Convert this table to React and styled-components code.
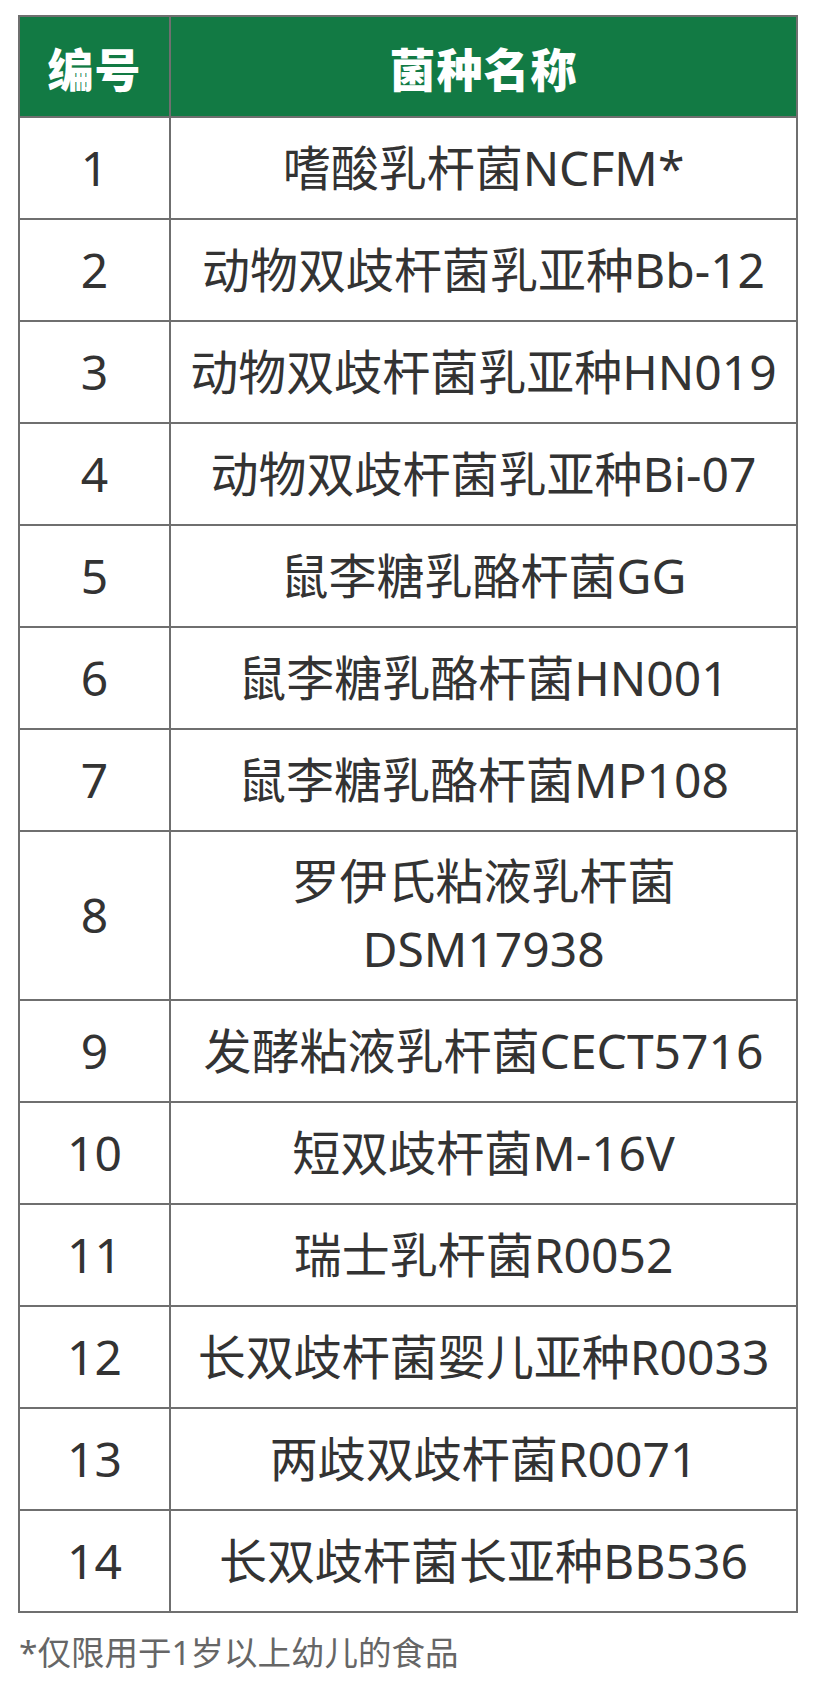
import styled, { createGlobalStyle } from 'styled-components'

const GlobalStyle = createGlobalStyle`
  html, body {
    margin: 0;
    padding: 0;
    background: #fff;
  }
  body {
    font-family: "Noto Sans", "Noto Sans CJK SC", sans-serif;
    color: #333;
  }
`

// Styles
const Page = styled('div')`
  width: 818px;
  padding: 15px 20px 0 18px;
  box-sizing: border-box;
`
const Table = styled('div')`
  display: flex;
  flex-flow: column nowrap;
  border-top: 2px solid #6f6f6f;
  border-left: 2px solid #6f6f6f;
  width: 780px;
  box-sizing: border-box;
`
const Row = styled('div')`
  display: grid;
  grid-template-columns: 151px 1fr;
`
const Cell = styled('div')`
  display: flex;
  align-items: center;
  justify-content: center;
  text-align: center;
  min-height: ${({ $head }) => ($head ? '101px' : '102px')};
  padding: 0 8px;
  box-sizing: border-box;
  border-right: 2px solid #6f6f6f;
  border-bottom: 2px solid #6f6f6f;
  font-size: 48px;
  line-height: 68px;
  color: #333;
  background: #fff;
  ${({ $double }) => $double && 'padding: 15px 8px 16px;'}
`
const HeadCell = styled(Cell)`
  background: #127a44;
  color: #fff;
  font-family: "Noto Sans CJK SC", sans-serif;
  font-weight: 900;
  font-size: 46px;
  letter-spacing: 1px;
`
const Note = styled('div')`
  margin-top: 17px;
  padding-left: 1px;
  font-size: 33.5px;
  line-height: 44px;
  color: #666;
`

const strains = [
  ['1', '嗜酸乳杆菌NCFM*'],
  ['2', '动物双歧杆菌乳亚种Bb-12'],
  ['3', '动物双歧杆菌乳亚种HN019'],
  ['4', '动物双歧杆菌乳亚种Bi-07'],
  ['5', '鼠李糖乳酪杆菌GG'],
  ['6', '鼠李糖乳酪杆菌HN001'],
  ['7', '鼠李糖乳酪杆菌MP108'],
  ['8', ['罗伊氏粘液乳杆菌', 'DSM17938']],
  ['9', '发酵粘液乳杆菌CECT5716'],
  ['10', '短双歧杆菌M-16V'],
  ['11', '瑞士乳杆菌R0052'],
  ['12', '长双歧杆菌婴儿亚种R0033'],
  ['13', '两歧双歧杆菌R0071'],
  ['14', '长双歧杆菌长亚种BB536']
]

// Component
const App = () => (
  <Page>
    <GlobalStyle />
    <Table>
      <Row>
        <HeadCell $head>编号</HeadCell>
        <HeadCell $head>菌种名称</HeadCell>
      </Row>
      {strains.map(([num, name]) => {
        const isDouble = Array.isArray(name)
        return (
          <Row key={num}>
            <Cell $double={isDouble}>{num}</Cell>
            <Cell $double={isDouble}>
              {isDouble ? (
                <span>
                  {name[0]}
                  <br />
                  {name[1]}
                </span>
              ) : (
                name
              )}
            </Cell>
          </Row>
        )
      })}
    </Table>
    <Note>*仅限用于1岁以上幼儿的食品</Note>
  </Page>
)

export default App
